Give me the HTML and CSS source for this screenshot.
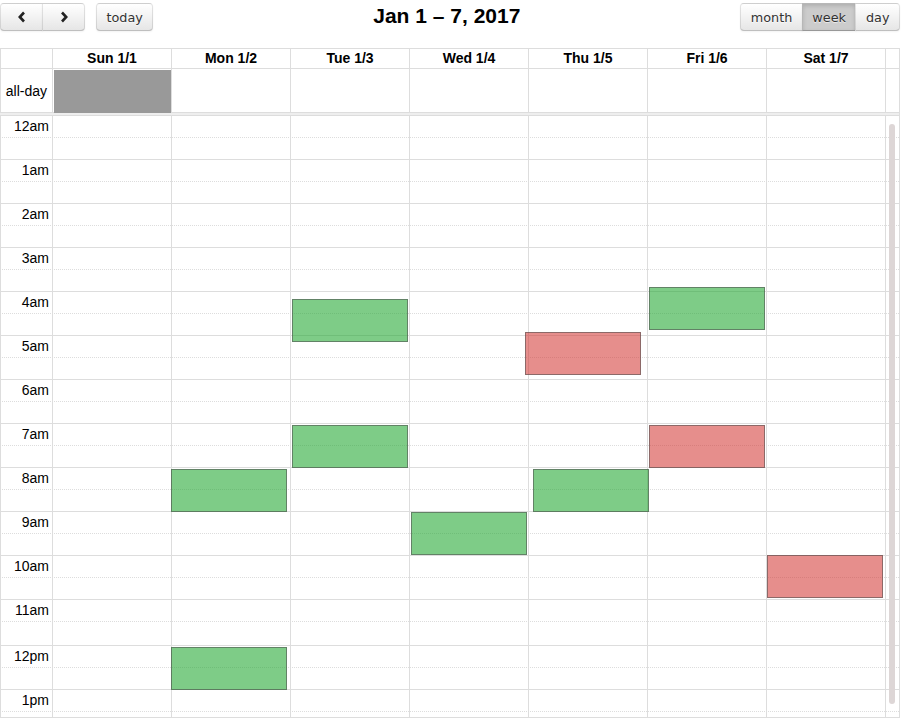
FILE: index.html
```html
<!DOCTYPE html>
<html>
<head>
<meta charset="utf-8">
<link rel="stylesheet" href="styles.css">
</head>
<body>
<div class="fc">
  <div class="toolbar">
    <div class="tb-left">
      <div class="btn-group">
        <button class="btn"><svg class="chev" width="10" height="12" viewBox="0 0 10 12"><path d="M7 1.5 L2.8 6 L7 10.5" fill="none" stroke="#222" stroke-width="2.6"/></svg></button>
        <button class="btn"><svg class="chev" width="10" height="12" viewBox="0 0 10 12"><path d="M3 1.5 L7.2 6 L3 10.5" fill="none" stroke="#222" stroke-width="2.6"/></svg></button>
      </div>
      <div class="btn-group"><button class="btn">today</button></div>
    </div>
    <h2 class="title">Jan 1 – 7, 2017</h2>
    <div class="btn-group">
      <button class="btn">month</button>
      <button class="btn active">week</button>
      <button class="btn">day</button>
    </div>
  </div>

  <div class="view">
    <div class="cols head">
      <div class="cell axis"></div>
      <div class="cell day">Sun 1/1</div>
      <div class="cell day">Mon 1/2</div>
      <div class="cell day">Tue 1/3</div>
      <div class="cell day">Wed 1/4</div>
      <div class="cell day">Thu 1/5</div>
      <div class="cell day">Fri 1/6</div>
      <div class="cell day">Sat 1/7</div>
      <div class="cell gutter"></div>
    </div>
    <div class="cols allday">
      <div class="cell axis allday-label">all-day</div>
      <div class="cell"><div class="allday-event"></div></div>
      <div class="cell"></div>
      <div class="cell"></div>
      <div class="cell"></div>
      <div class="cell"></div>
      <div class="cell"></div>
      <div class="cell"></div>
      <div class="cell gutter"></div>
    </div>
    <div class="divider"></div>

    <div class="scroller">
      <div class="slats">
        <div class="half"><span class="time">12am</span></div><div class="half hour-end"></div>
        <div class="half"><span class="time">1am</span></div><div class="half hour-end"></div>
        <div class="half"><span class="time">2am</span></div><div class="half hour-end"></div>
        <div class="half"><span class="time">3am</span></div><div class="half hour-end"></div>
        <div class="half"><span class="time">4am</span></div><div class="half hour-end"></div>
        <div class="half"><span class="time">5am</span></div><div class="half hour-end"></div>
        <div class="half"><span class="time">6am</span></div><div class="half hour-end"></div>
        <div class="half"><span class="time">7am</span></div><div class="half hour-end"></div>
        <div class="half"><span class="time">8am</span></div><div class="half hour-end"></div>
        <div class="half"><span class="time">9am</span></div><div class="half hour-end"></div>
        <div class="half"><span class="time">10am</span></div><div class="half hour-end"></div>
        <div class="half"><span class="time">11am</span></div><div class="half hour-end tall"></div>
        <div class="half"><span class="time">12pm</span></div><div class="half hour-end"></div>
        <div class="half"><span class="time">1pm</span></div><div class="half hour-end"></div>
        <div class="half"></div><div class="half hour-end"></div>
      </div>
      <div class="cols body-cols">
        <div class="col axis"></div>
        <div class="col"></div>
        <div class="col">
          <div class="event green" style="top:353px;left:-1px"></div>
          <div class="event green" style="top:531px;left:-1px"></div>
        </div>
        <div class="col">
          <div class="event green" style="top:183px;left:1px"></div>
          <div class="event green" style="top:309px;left:1px"></div>
        </div>
        <div class="col">
          <div class="event green" style="top:396px;left:1px"></div>
        </div>
        <div class="col">
          <div class="event red" style="top:216px;left:-4px"></div>
          <div class="event green" style="top:353px;left:4px"></div>
        </div>
        <div class="col">
          <div class="event green" style="top:171px;left:1px"></div>
          <div class="event red" style="top:309px;left:1px"></div>
        </div>
        <div class="col">
          <div class="event red" style="top:439px;left:0px"></div>
        </div>
        <div class="col gutter-col"></div>
      </div>
      <div class="thumb"></div>
    </div>
  </div>
</div>
</body>
</html>
```

FILE: styles.css
```css
html, body {
  margin: 0;
  padding: 0;
  background: #fff;
  overflow: hidden;
}

.fc {
  width: 900px;
  font-family: "Liberation Sans", Arial, sans-serif;
  font-size: 14px;
  color: #000;
}

.toolbar {
  display: flex;
  align-items: flex-start;
  height: 48px;
  padding-top: 3px;
  box-sizing: border-box;
}

.tb-left {
  display: flex;
  gap: 11px;
}

.title {
  flex: 1;
  margin: 0;
  text-align: center;
  font-size: 21px;
  font-weight: bold;
  line-height: 26px;
}

.btn-group {
  display: flex;
}

.btn {
  height: 28px;
  margin: 0 0 0 -1px;
  padding: 0 9.5px;
  font-family: "DejaVu Sans", sans-serif;
  font-size: 12.8px;
  color: #333;
  background-color: #f5f5f5;
  background-image: linear-gradient(to bottom, #fff, #e6e6e6);
  border: 1px solid;
  border-color: rgba(0,0,0,.1) rgba(0,0,0,.1) rgba(0,0,0,.25);
  box-shadow: inset 0 1px 0 rgba(255,255,255,.2), 0 1px 2px rgba(0,0,0,.05);
  text-shadow: 0 1px 1px rgba(255,255,255,.75);
  border-radius: 0;
  display: flex;
  align-items: center;
  justify-content: center;
}

.btn-group .btn:first-child {
  margin-left: 0;
  border-top-left-radius: 4px;
  border-bottom-left-radius: 4px;
}

.btn-group .btn:last-child {
  border-top-right-radius: 4px;
  border-bottom-right-radius: 4px;
}

.tb-left .btn-group:first-child .btn {
  width: 43px;
}

.btn.active {
  background-color: #ccc;
  background-image: none;
  box-shadow: inset 0 2px 4px rgba(0,0,0,.15), 0 1px 2px rgba(0,0,0,.05);
}

.chev {
  display: block;
}

/* grid */
.view {
  width: 900px;
  border-right: 1px solid #ddd;
  box-sizing: border-box;
}

.cols {
  display: grid;
  grid-template-columns: 53px repeat(7, 1fr) 13px;
}

.head {
  border-top: 1px solid #ddd;
  border-bottom: 1px solid #ddd;
}

.cell {
  border-right: 1px solid #ddd;
}

.cols > .cell:first-child,
.cols > .col:first-child {
  border-left: 1px solid #ddd;
}

.cols > .gutter {
  border-right: none;
}

.head .cell {
  height: 19px;
  line-height: 19px;
  text-align: center;
  font-weight: bold;
}

.allday .cell {
  height: 43px;
  position: relative;
}

.allday-label {
  display: flex;
  align-items: center;
  justify-content: flex-end;
  padding-right: 5px;
  box-sizing: border-box;
}

.allday-event {
  margin: 1px 0 0 1px;
  height: 43px;
  background: #999;
}

.divider {
  height: 2px;
  background: #eee;
  border-top: 1px solid #ddd;
  border-bottom: 1px solid #ddd;
}

.scroller {
  position: relative;
  height: 602px;
  overflow: hidden;
  border-bottom: 1px solid #ddd;
  box-sizing: border-box;
}

.half {
  height: 22px;
  box-sizing: border-box;
  border-bottom: 1px dotted #ddd;
  border-left: 1px solid #ddd;
}

.half.hour-end {
  border-bottom-style: solid;
}

.half.tall {
  height: 24px;
}

.time {
  display: block;
  width: 53px;
  box-sizing: border-box;
  padding-right: 5px;
  text-align: right;
  line-height: 21px;
}

.body-cols {
  position: absolute;
  top: 0;
  left: 0;
  right: 0;
  bottom: 0;
}

.col {
  position: relative;
  border-right: 1px solid #ddd;
}

.col.gutter-col {
  border-right: none;
}

.event {
  position: absolute;
  width: 116px;
  height: 43px;
  box-sizing: border-box;
  border: 1px solid rgba(80,80,80,.6);
}

.event.green {
  background: rgba(40,170,55,.6);
}

.event.red {
  background: rgba(210,50,45,.55);
}

.thumb {
  position: absolute;
  top: 8px;
  bottom: 13px;
  right: 4px;
  width: 6px;
  border-radius: 3px;
  background: #ddd6d6;
}
```
